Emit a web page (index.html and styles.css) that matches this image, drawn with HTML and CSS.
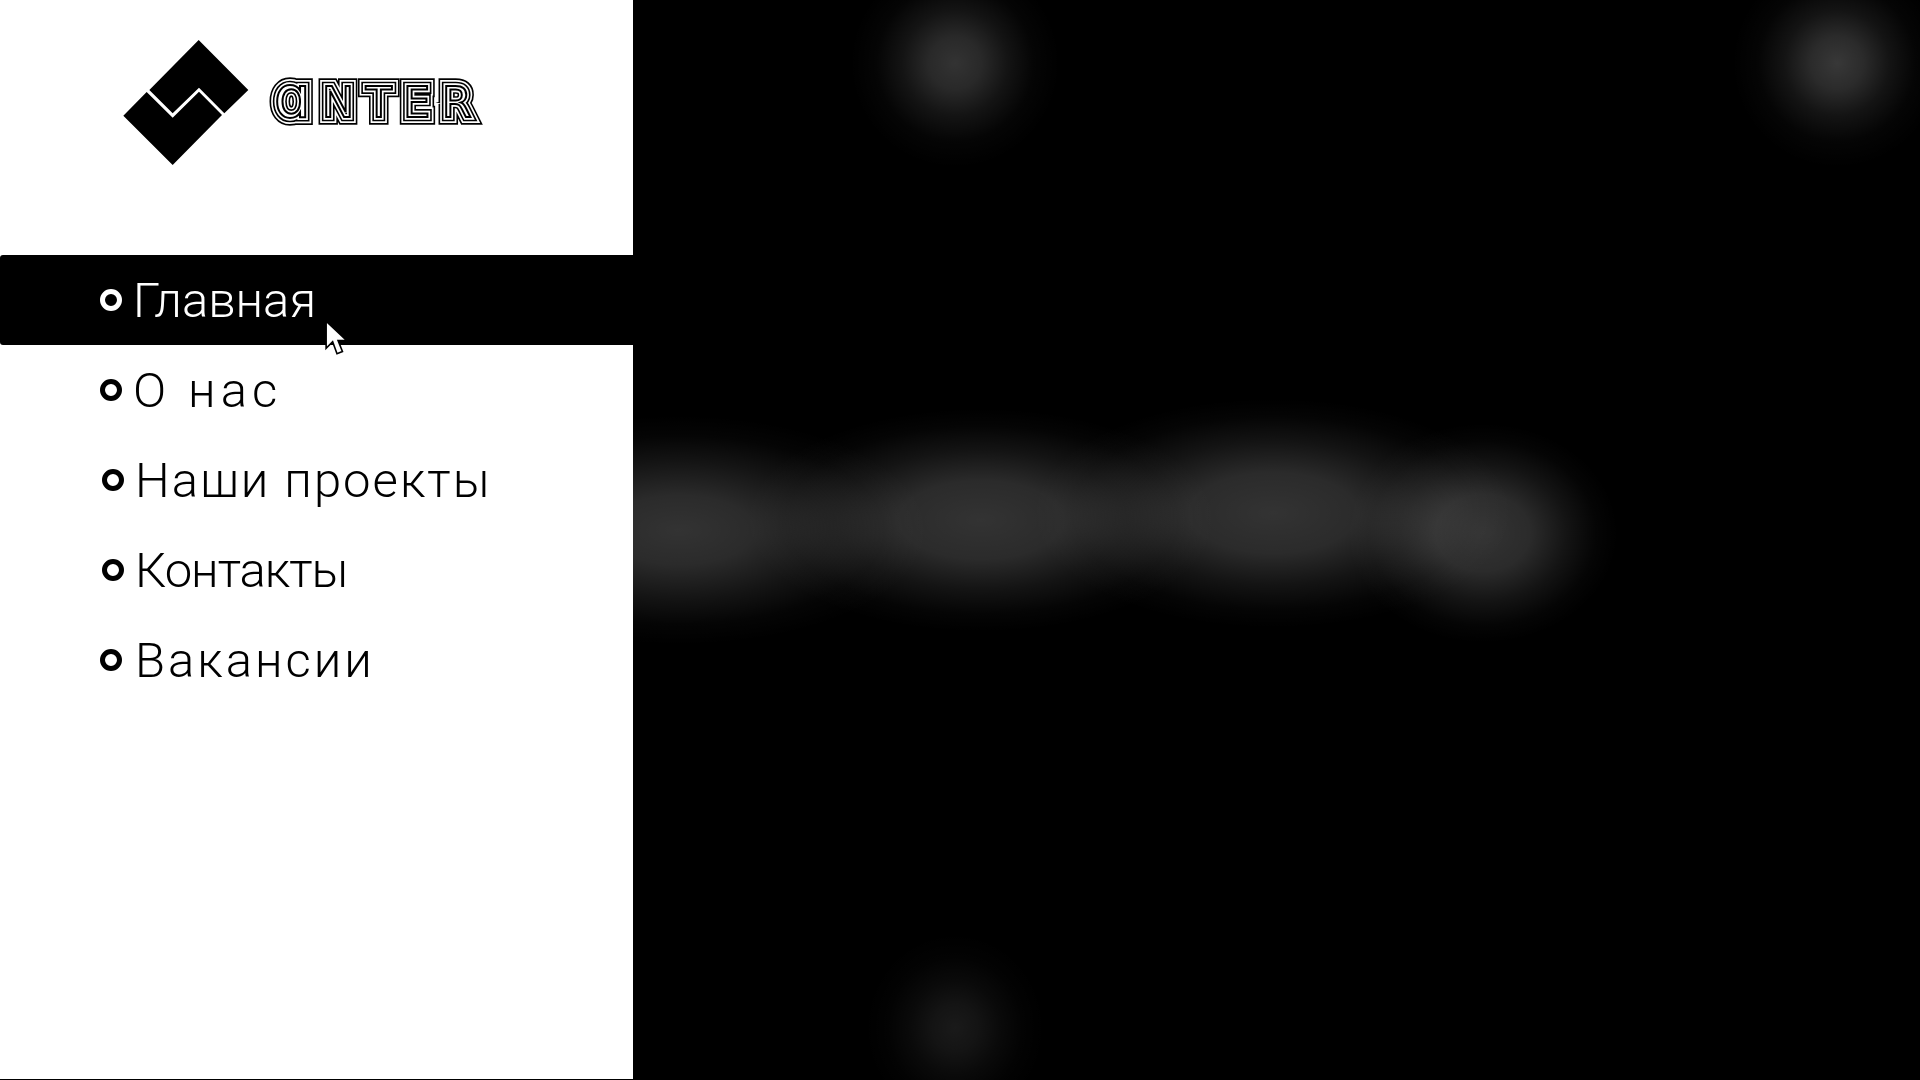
FILE: index.html
```html
<!DOCTYPE html>
<html lang="ru">
<head>
  <meta charset="UTF-8" />
  <title>Антер</title>
  <link rel="stylesheet" href="styles.css">
</head>
<body>
  <aside class="sidebar">
    <header class="logo">
      <svg class="logo-svg" viewBox="0 0 1200 480" width="400" height="160">
        <polygon points="296,60 445,210 373,280 297,203 218,280 148,210" />
        <polygon points="140,216 218,293 297,215 366,285 218,435 70,287" />
        <g class="wordmark s1"><text id="mark" x="522" y="290"><tspan class="mark-a">ɑ</tspan>NTER</text></g>
        <use class="wordmark s2" href="#mark" />
        <use class="wordmark s3" href="#mark" />
        <use class="wordmark s4" href="#mark" />
        <use class="wordmark s5" href="#mark" />
      </svg>
    </header>

    <nav class="menu">
      <a class="menu-item active" href="#"><span class="dot"></span>Главная</a>
      <a class="menu-item about" href="#"><span class="dot"></span>О нас</a>
      <a class="menu-item projects" href="#"><span class="dot"></span>Наши проекты</a>
      <a class="menu-item contacts" href="#"><span class="dot"></span>Контакты</a>
      <a class="menu-item jobs" href="#"><span class="dot"></span>Вакансии</a>
    </nav>

    <svg class="cursor" viewBox="0 0 22 34" width="24" height="37">
      <path d="M1 1 L1 26 L7 20 L11 31 L16 29 L12 19 L20 19 Z" />
    </svg>
  </aside>

  <main class="preview"></main>
</body>
</html>
```

FILE: styles.css
```css
html, body {
  margin: 0;
  height: 100%;
  overflow: hidden;
  background: #000;
}

body {
  display: flex;
  align-items: flex-start;
  font-family: "Roboto", "Liberation Sans", sans-serif;
}

.sidebar {
  position: relative;
  width: 633px;
  height: 1079px;
  flex-shrink: 0;
  background: #fff;
}

.logo {
  height: 255px;
  box-sizing: border-box;
  padding: 20px 0 0 100px;
}

.logo-svg {
  display: block;
  filter: grayscale(1);
}

.wordmark {
  font-family: "DejaVu Sans", sans-serif;
  font-size: 128px;
  letter-spacing: 35px;
  fill: none;
  stroke-linejoin: miter;
}

.mark-a {
  font-size: 172px;
}

.s1 { stroke: #000; stroke-width: 46px; }
.s2 { stroke: #fff; stroke-width: 36px; }
.s3 { stroke: #000; stroke-width: 26px; }
.s4 { stroke: #fff; stroke-width: 16px; }
.s5 { stroke: #000; stroke-width: 6px; }

.menu {
  display: flex;
  flex-direction: column;
}

.menu-item {
  display: flex;
  align-items: center;
  height: 90px;
  padding-left: 100px;
  color: #000;
  font-size: 49px;
  font-weight: 300;
  text-decoration: none;
}

.menu-item.active {
  background: #000;
  color: #fff;
  border-radius: 3px 0 0 3px;
}

.menu-item.about { letter-spacing: 5px; }

.menu-item.projects {
  padding-left: 102px;
  letter-spacing: 2px;
}

.menu-item.contacts {
  padding-left: 102px;
  letter-spacing: -1px;
}

.menu-item.jobs { letter-spacing: 3px; }
.menu-item.jobs .dot { margin-right: 13px; }

.dot {
  width: 22px;
  height: 22px;
  box-sizing: border-box;
  border: 5px solid currentColor;
  border-radius: 50%;
  margin-right: 11px;
  flex-shrink: 0;
}

.cursor {
  position: absolute;
  left: 325px;
  top: 320px;
  fill: #fff;
  stroke: #000;
  stroke-width: 1.5px;
}

.preview {
  flex: 1;
  height: 1080px;
  background-color: #000;
  background-image:
    radial-gradient(ellipse 105px 105px at 322px 63px, rgba(255,255,255,.2), rgba(255,255,255,.16) 25%, rgba(255,255,255,.08) 50%, rgba(255,255,255,.02) 75%, rgba(255,255,255,0) 100%),
    radial-gradient(ellipse 105px 105px at 1204px 63px, rgba(255,255,255,.22), rgba(255,255,255,.17) 25%, rgba(255,255,255,.08) 50%, rgba(255,255,255,.02) 75%, rgba(255,255,255,0) 100%),
    radial-gradient(ellipse 90px 95px at 322px 1028px, rgba(255,255,255,.1), rgba(255,255,255,.08) 25%, rgba(255,255,255,.04) 50%, rgba(255,255,255,.01) 75%, rgba(255,255,255,0) 100%),
    radial-gradient(ellipse 250px 115px at 46px 530px, rgba(255,255,255,.2), rgba(255,255,255,.17) 30%, rgba(255,255,255,.08) 60%, rgba(255,255,255,.02) 82%, rgba(255,255,255,0) 100%),
    radial-gradient(ellipse 235px 112px at 348px 520px, rgba(255,255,255,.2), rgba(255,255,255,.17) 35%, rgba(255,255,255,.08) 62%, rgba(255,255,255,.02) 84%, rgba(255,255,255,0) 100%),
    radial-gradient(ellipse 240px 115px at 640px 513px, rgba(255,255,255,.2), rgba(255,255,255,.17) 35%, rgba(255,255,255,.08) 62%, rgba(255,255,255,.02) 84%, rgba(255,255,255,0) 100%),
    radial-gradient(ellipse 135px 110px at 850px 533px, rgba(255,255,255,.2), rgba(255,255,255,.17) 35%, rgba(255,255,255,.08) 62%, rgba(255,255,255,.02) 84%, rgba(255,255,255,0) 100%);
}
```
